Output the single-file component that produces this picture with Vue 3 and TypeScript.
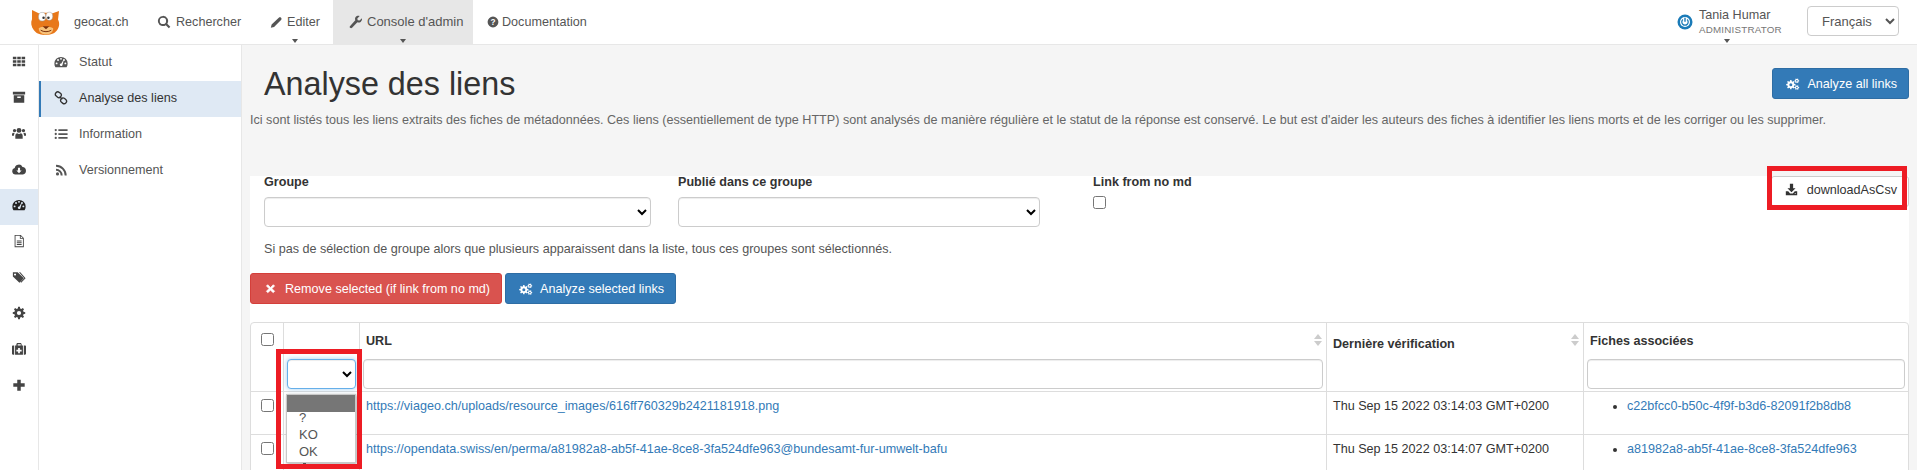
<script setup lang="ts">
const c = (x: number, y: number, r: number) =>
  `M${x - r} ${y}a${r} ${r} 0 1 0 ${2 * r} 0a${r} ${r} 0 1 0 ${-2 * r} 0z`

const gear = (cx: number, cy: number, r: number, hole: number, teeth = 8) => {
  const pts: string[] = []
  for (let i = 0; i < teeth; i++) {
    const a = (i / teeth) * Math.PI * 2
    const w = Math.PI / teeth / 2
    const inner = r * 0.74
    ;[
      [a - w * 1.3, inner],
      [a - w * 0.7, r],
      [a + w * 0.7, r],
      [a + w * 1.3, inner],
    ].forEach(([t, d]) => {
      pts.push(`${(cx + Math.cos(t) * d).toFixed(2)} ${(cy + Math.sin(t) * d).toFixed(2)}`)
    })
  }
  return `M${pts.join('L')}z${c(cx, cy, hole)}`
}

const gauge =
  'M8 2.2a7.6 7.6 0 0 0-7.6 7.6c0 1.5.4 2.9 1.1 4a.6.6 0 0 0 .5.3h12a.6.6 0 0 0 .5-.3c.7-1.1 1.1-2.5 1.1-4A7.6 7.6 0 0 0 8 2.2z' +
  c(3, 9.6, 1.1) + c(4.6, 5.8, 1.1) + c(8, 4.4, 1.1) + c(13, 9.6, 1.1) + c(11.4, 5.8, 1.1) +
  'M6.6 11.2a1.6 1.6 0 0 0 2.9.8l1.5-5.4-.7-.2-1.9 3.4a1.6 1.6 0 0 0-1.8 1.4z'

const icons: Record<string, string> = {
  grid: 'M1 3h4v3H1zM6 3h4v3H6zM11 3h4v3h-4zM1 7h4v3H1zM6 7h4v3H6zM11 7h4v3h-4zM1 11h4v3H1zM6 11h4v3H6zM11 11h4v3h-4z',
  archive: 'M1 2h14v3H1zM2 6h12v8.500H2zM6 7.500v1.500h4V7.500z',
  users:
    c(8, 5, 2.8) + c(2.9, 5.2, 1.9) + c(13.1, 5.2, 1.9) +
    'M3.800 14.500v-3.300c0-2 1.400-2.900 2.200-2.900.6.500 1.200.7 2 .7s1.400-.2 2-.7c.8 0 2.200.9 2.200 2.900v3.300zM0 11.200V9.400c0-1 .8-1.800 1.600-1.800.5.400 1 .6 1.600.6-.6.700-1 1.600-1 2.800v.2zM16 11.200V9.400c0-1-.8-1.800-1.600-1.800-.5.400-1 .6-1.600.6.6.700 1 1.600 1 2.800v.2z',
  cloud:
    'M4 14.200a3.700 3.700 0 0 1-.9-7.300 4.700 4.700 0 0 1 8.900-1.200 4.300 4.300 0 0 1 .5 8.500zM6.800 6.500v3.200H5l3 3.200 3-3.200H9.200V6.500z',
  gauge,
  file:
    'M3 1h7l3.500 3.500V15H3zM4 2v12h8.500V5.500H9V2zM10 2.300V4.500h2.200zM5.500 7.500h5.500v1H5.500zM5.500 9.500h5.500v1H5.500zM5.500 11.500h5.500v1H5.500z',
  tags:
    'M1 2.500h5.500l7 7-5 5-7.500-7zM3.500 4a1.200 1.200 0 1 0 .01 0zM8 2.500h1.500l6 7-5 5-.8-.8 4.300-4.200z',
  cog: gear(8, 8, 7.2, 2.4),
  medkit:
    'M5 4V2.500C5 1.700 5.700 1 6.500 1h3c.8 0 1.500.7 1.500 1.500V4h-1V2.500h-3.500V4zM1 4h1.500v10.500H1c-.5 0-1-.5-1-1V5c0-.5.5-1 1-1zM13.500 4H15c.5 0 1 .5 1 1v8.500c0 .5-.5 1-1 1h-1.500zM3.500 4h9v10.500h-9zM7 6.800v2H5v2h2v2h2v-2h2v-2H9v-2z',
  plus: 'M6 2h4v4h4.500v4H10v4.500H6V10H1.500V6H6z',
  search:
    'M6.800 1a5.800 5.800 0 1 0 3.300 10.600l3.400 3.400 1.700-1.700-3.400-3.400A5.800 5.800 0 0 0 6.800 1zM6.800 3.200a3.600 3.600 0 1 1 0 7.200 3.600 3.600 0 0 1 0-7.200z',
  pencil: 'M10.800 2.200c.8-.8 2-.8 2.800 0s.8 2 0 2.800l-8.600 8.600-4 1 1-4z',
  wrench:
    'M14.800 3.800l-2.800 2.600-2-.5-.5-2 2.700-2.700c-1.800-.6-3.700-.1-4.600 1.200-.8 1.100-.9 2.400-.4 3.500L1.300 12.500c-.7.700-.7 1.600 0 2.200s1.500.6 2.200 0l6.100-6.300c1.200.5 2.600.3 3.700-.5 1.300-1 1.800-2.700 1.500-4.100z',
  question: c(8, 8, 7.2),
  list:
    c(2, 3.500, 1.300) + c(2, 8, 1.300) + c(2, 12.500, 1.300) +
    'M5 2.500h10.500v2H5zM5 7h10.500v2H5zM5 11.500h10.500v2H5z',
  rss:
    c(4, 12.500, 1.800) +
    'M2.300 6.500v2.300a5.300 5.300 0 0 1 5.300 5.400h2.300a7.600 7.600 0 0 0-7.600-7.700zM2.300 2v2.300a9.900 9.900 0 0 1 9.900 9.900h2.300A12.200 12.200 0 0 0 2.300 2z',
  cogs: gear(5.800, 8.800, 5.600, 1.800) + gear(13, 4.200, 2.900, 1, 6) + gear(13, 12.300, 2.900, 1, 6),
  times: 'M4 2.500l4 4 4-4 2 2-4 3.500 4 4-2 2-4-3.500-4 3.500-2-2 4-4-4-3.500z',
  download:
    'M6 1h4v5.500h3L8 11.500 3 6.500h3zM1 10h3l2.300 3h3.400L12 10h3v5H1zM12 12.500h1.200v1H12z',
}

const rail = [
  { icon: 'grid', active: false },
  { icon: 'archive', active: false },
  { icon: 'users', active: false },
  { icon: 'cloud', active: false },
  { icon: 'gauge', active: true },
  { icon: 'file', active: false },
  { icon: 'tags', active: false },
  { icon: 'cog', active: false },
  { icon: 'medkit', active: false },
  { icon: 'plus', active: false },
]

const subnav = [
  { icon: 'gauge', label: 'Statut', active: false },
  { icon: 'link', label: 'Analyse des liens', active: true },
  { icon: 'list', label: 'Information', active: false },
  { icon: 'rss', label: 'Versionnement', active: false },
]

const rows = [
  {
    url: 'https://viageo.ch/uploads/resource_images/616ff760329b2421181918.png',
    date: 'Thu Sep 15 2022 03:14:03 GMT+0200',
    record: 'c22bfcc0-b50c-4f9f-b3d6-82091f2b8db8',
  },
  {
    url: 'https://opendata.swiss/en/perma/a81982a8-ab5f-41ae-8ce8-3fa524dfe963@bundesamt-fur-umwelt-bafu',
    date: 'Thu Sep 15 2022 03:14:07 GMT+0200',
    record: 'a81982a8-ab5f-41ae-8ce8-3fa524dfe963',
  },
]
</script>

<template>
  <div class="app">
    <header class="topbar">
      <a class="brand">
        <svg class="logo" viewBox="0 0 32 28">
          <path d="M2 1l8 4c3-1.500 9-1.500 12 0l8-3-1 9c1.500 3 2 7-1 11-3 4-8 5-12 5s-9-1-12-5C1 18 .5 14 2 10.500z" fill="#e8781a" />
          <path d="M9 20c3-2 11-2 15 0 0 4-3 6.500-7.500 6.500S9 24 9 20z" fill="#f7c27a" />
          <ellipse cx="12.500" cy="8" rx="3.800" ry="4.500" fill="#fff" stroke="#999" stroke-width=".5" />
          <ellipse cx="20" cy="7.500" rx="3.500" ry="4.200" fill="#fff" stroke="#999" stroke-width=".5" />
          <circle cx="14" cy="9" r="1.300" fill="#333" />
          <circle cx="19" cy="9" r="1.300" fill="#333" />
          <path d="M13 18h7l-3.500 3z" fill="#7a2f0a" />
          <path d="M11 22c3 2 8 2 11 0" fill="none" stroke="#7a2f0a" stroke-width="1" />
        </svg>
        <span>geocat.ch</span>
      </a>
      <nav class="mainnav">
        <a class="nav-item search-item">
          <svg class="ic" viewBox="0 0 16 16"><path fill-rule="evenodd" :d="icons.search" /></svg>Rechercher
        </a>
        <a class="nav-item edit-item caret">
          <svg class="ic" viewBox="0 0 16 16"><path :d="icons.pencil" /></svg>Editer
        </a>
        <a class="nav-item admin-item caret current">
          <svg class="ic" viewBox="0 0 16 16"><path :d="icons.wrench" /></svg>Console d'admin
        </a>
        <a class="nav-item doc-item">
          <svg class="ic ic-q" viewBox="0 0 16 16">
            <path :d="icons.question" />
            <text x="8" y="12" text-anchor="middle" class="q-mark">?</text>
          </svg>Documentation
        </a>
      </nav>
      <div class="user caret">
        <svg class="power" viewBox="0 0 18 18">
          <circle cx="9" cy="9" r="7.500" fill="#1a7bb8" />
          <circle cx="9" cy="9" r="5" fill="#fff" />
          <path d="M6.900 6.600a3.200 3.200 0 1 0 4.200 0" fill="none" stroke="#1a7bb8" stroke-width="1.300" />
          <path d="M9 4.800v4" stroke="#1a7bb8" stroke-width="1.400" />
        </svg>
        <div class="user-text">
          <div class="user-name">Tania Humar</div>
          <div class="user-role">ADMINISTRATOR</div>
        </div>
      </div>
      <select class="lang"><option>Français</option></select>
    </header>

    <div class="layout">
      <aside class="rail">
        <a v-for="item in rail" :key="item.icon" class="rail-item" :class="{ on: item.active }">
          <svg class="ic" viewBox="0 0 16 16"><path fill-rule="evenodd" :d="icons[item.icon]" /></svg>
        </a>
      </aside>

      <aside class="subnav">
        <a v-for="item in subnav" :key="item.label" class="sub-item" :class="{ on: item.active }">
          <svg v-if="item.icon === 'link'" class="ic sub-ic" viewBox="0 0 16 16">
            <g fill="none" stroke="#333" stroke-width="1.500">
              <rect x="1.500" y="1.500" width="7" height="5.500" rx="2.700" transform="rotate(40 5 4.200)" />
              <rect x="7.500" y="8.500" width="7" height="5.500" rx="2.700" transform="rotate(40 11 11.200)" />
              <path d="M6.500 6.500l3 3" />
            </g>
          </svg>
          <svg v-else class="ic sub-ic" viewBox="0 0 16 16"><path fill-rule="evenodd" :d="icons[item.icon]" /></svg>
          <span>{{ item.label }}</span>
        </a>
      </aside>

      <main class="main">
        <div class="page-head">
          <div class="title-row">
            <h1>Analyse des liens</h1>
            <button class="btn primary">
              <svg class="ic btn-ic" viewBox="0 0 18 16"><path fill-rule="evenodd" :d="icons.cogs" /></svg>Analyze all links
            </button>
          </div>
          <p class="lead">Ici sont listés tous les liens extraits des fiches de métadonnées. Ces liens (essentiellement de type HTTP) sont analysés de manière régulière et le statut de la réponse est conservé. Le but est d'aider les auteurs des fiches à identifier les liens morts et de les corriger ou les supprimer.</p>
        </div>

        <section class="card">
          <div class="filters">
            <div class="field f1">
              <label>Groupe</label>
              <select class="control"><option></option></select>
            </div>
            <div class="field f2">
              <label>Publié dans ce groupe</label>
              <select class="control"><option></option></select>
            </div>
            <div class="field f3">
              <label>Link from no md</label>
              <input type="checkbox" />
            </div>
            <button class="btn plain">
              <svg class="ic dl-ic" viewBox="0 0 16 16"><path fill-rule="evenodd" :d="icons.download" /></svg>downloadAsCsv
            </button>
          </div>

          <p class="hint">Si pas de sélection de groupe alors que plusieurs apparaissent dans la liste, tous ces groupes sont sélectionnés.</p>

          <div class="actions">
            <button class="btn danger">
              <svg class="ic x-ic" viewBox="0 0 16 16"><path :d="icons.times" /></svg>Remove selected (if link from no md)
            </button>
            <button class="btn primary">
              <svg class="ic btn-ic" viewBox="0 0 18 16"><path fill-rule="evenodd" :d="icons.cogs" /></svg>Analyze selected links
            </button>
          </div>

          <table class="links">
            <colgroup>
              <col class="c1" /><col class="c2" /><col class="c3" /><col class="c4" /><col class="c5" />
            </colgroup>
            <thead>
              <tr class="head-row">
                <th class="center"><input type="checkbox" /></th>
                <th></th>
                <th class="sortable">URL<i class="sort"></i></th>
                <th class="sortable low">Dernière vérification<i class="sort"></i></th>
                <th>Fiches associées</th>
              </tr>
              <tr class="filter-row">
                <th></th>
                <th><select class="control focus"><option></option></select></th>
                <th><input class="control" type="text" /></th>
                <th></th>
                <th><input class="control" type="text" /></th>
              </tr>
            </thead>
            <tbody>
              <tr v-for="row in rows" :key="row.url">
                <td class="center"><input type="checkbox" /></td>
                <td></td>
                <td><a class="lnk">{{ row.url }}</a></td>
                <td>{{ row.date }}</td>
                <td>
                  <ul class="records"><li><a class="lnk">{{ row.record }}</a></li></ul>
                </td>
              </tr>
            </tbody>
          </table>

          <ul class="popup">
            <li class="sel">&nbsp;</li>
            <li>?</li>
            <li>KO</li>
            <li>OK</li>
          </ul>
          <i class="popup-dot"></i>
          <div class="mark mark-filter"></div>
          <div class="mark mark-download"></div>
        </section>
      </main>
    </div>
  </div>
</template>

<style>
html, body { margin: 0; overflow: hidden; background: #fff; }
</style>

<style scoped>
.app {
  width: 1917px;
  height: 470px;
  overflow: hidden;
  font-family: "Liberation Sans", Arial, sans-serif;
  font-size: 12.6px;
  line-height: 18px;
  color: #555;
  background: #fff;
  display: flex;
  flex-direction: column;
}
.ic { width: 14px; height: 14px; fill: currentColor; flex: none; display: block; }

.topbar {
  height: 44px;
  flex: none;
  display: flex;
  align-items: stretch;
  border-bottom: 1px solid #e7e7e7;
  box-sizing: content-box;
}
.brand {
  display: flex;
  align-items: center;
  padding-left: 30px;
  width: 127px;
  box-sizing: border-box;
  color: #555;
}
.logo { width: 31px; height: 27px; margin-right: 13px; margin-top: 1px; flex: none; }
.mainnav { display: flex; flex: 1; }
.nav-item {
  display: flex;
  align-items: center;
  gap: 4px;
  position: relative;
  color: #555;
}
.search-item { width: 143px; padding-left: 30px; box-sizing: border-box; gap: 5px; }
.edit-item { width: 63px; }
.edit-item .ic { width: 13px; height: 13px; }
.admin-item { width: 140px; padding-left: 16px; box-sizing: border-box; background: #e7e7e7; font-size: 13px; }
.doc-item { padding-left: 14px; gap: 3px; }
.ic-q { width: 12px; height: 12px; }
.q-mark { fill: #fff; font-size: 11px; font-weight: 700; font-family: "Liberation Sans", sans-serif; }
.caret::after {
  content: "";
  position: absolute;
  left: 50%;
  bottom: 1px;
  margin-left: -3px;
  border: 3px solid transparent;
  border-top: 4px solid #555;
  border-bottom: 0;
}
.edit-item.caret::after { left: 22px; margin-left: 0; }
.admin-item.caret::after { left: 67px; margin-left: 0; }
.user {
  position: relative;
  display: flex;
  align-items: center;
  width: 129px;
  margin-right: 2px;
  box-sizing: border-box;
}
.user.caret::after { left: 48px; margin-left: 0; }
.power { width: 18px; height: 18px; margin-right: 5px; }
.user-name { font-size: 12.6px; line-height: 16px; }
.user-role { font-size: 9.8px; line-height: 14px; letter-spacing: .2px; color: #777; }
.lang {
  width: 92px;
  height: 30px;
  margin: 6px 18px 0 0;
  padding: 0 4px 0 10px;
  border: 1px solid #ccc;
  border-radius: 4px;
  background: #fff;
  color: #555;
  font: 13px "Liberation Sans", Arial, sans-serif;
}

.layout { flex: 1; display: flex; min-height: 0; }
.rail {
  width: 38px;
  flex: none;
  border-right: 1px solid #e7e7e7;
  background: #fff;
  box-sizing: content-box;
}
.rail-item {
  height: 36px;
  display: flex;
  align-items: center;
  justify-content: center;
  color: #444;
}
.rail-item .ic { transform: translateY(-2px); }
.rail-item.on { background: #dfe9f4; color: #222; }
.subnav {
  width: 202px;
  flex: none;
  background: #fff;
  border-right: 1px solid #e7e7e7;
}
.sub-item {
  height: 36px;
  display: flex;
  align-items: center;
  padding-left: 13px;
  padding-bottom: 2px;
  color: #555;
  border-left: 2px solid transparent;
  box-sizing: border-box;
}
.sub-item.on { background: #dfe9f4; border-left-color: #337ab7; color: #333; }
.sub-ic { margin-right: 11px; }

.main {
  flex: 1;
  min-width: 0;
  background: #f5f5f5;
  padding: 0 8px;
}
.page-head { height: 131px; }
.title-row {
  display: flex;
  justify-content: space-between;
  padding-top: 23px;
}
h1 {
  margin: -1px 0 0 14px;
  font-size: 32.3px;
  font-weight: 400;
  line-height: 35px;
  color: #333;
}
.lead { margin: 9px 0 0; color: #666; }
.btn {
  height: 31px;
  padding: 0 11px 0 13px;
  display: inline-flex;
  align-items: center;
  border: 1px solid transparent;
  border-radius: 3px;
  color: #fff;
  font: 12.6px "Liberation Sans", Arial, sans-serif;
}
.primary { background: #337ab7; border-color: #2e6da4; }
.danger { background: #d9534f; border-color: #d43f3a; }
.btn-ic { width: 15px; height: 14px; margin-right: 6px; }
.x-ic { width: 11px; height: 11px; margin-right: 9px; margin-left: 1px; stroke: currentColor; stroke-width: 1; }

.card {
  background: #fff;
  height: 295px;
  position: relative;
}
.filters { display: flex; align-items: flex-start; padding-left: 14px; }
.field { display: flex; flex-direction: column; }
.field label { font-weight: 700; color: #333; line-height: 13px; margin-bottom: 8px; }
.f1 { width: 387px; margin-right: 27px; }
.f2 { width: 362px; margin-right: 53px; }
.f3 input { margin: -1px 0 0; width: 13px; height: 13px; }
.plain {
  margin-left: auto;
  background: #fff;
  border-color: #ccc;
  color: #333;
  padding: 0 11px 4px 13px;
}
.dl-ic { margin-right: 9px; width: 13px; height: 13px; }
.control {
  width: 100%;
  height: 30px;
  box-sizing: border-box;
  border: 1px solid #ccc;
  border-radius: 4px;
  background: #fff;
  font: 13px "Liberation Sans", Arial, sans-serif;
  box-shadow: inset 0 1px 1px rgba(0, 0, 0, .075);
  display: block;
}
.hint { margin: 13px 0 0 14px; }
.actions { display: flex; gap: 3px; margin-top: 15px; }
.links {
  margin-top: 18px;
  width: 1659px;
  table-layout: fixed;
  border-collapse: separate;
  border-spacing: 0;
  border: 1px solid #ddd;
  border-radius: 4px 4px 0 0;
  color: #333;
}
.c1 { width: 32px; }
.c2 { width: 76px; }
.c3 { width: 967px; }
.c4 { width: 257px; }
.links th, .links td {
  border-left: 1px solid #ddd;
  padding: 0 3px;
  text-align: left;
}
.links th:first-child, .links td:first-child { border-left: 0; }
.head-row th {
  height: 31px;
  font-weight: 700;
  color: #333;
  position: relative;
  padding-left: 6px;
}
.head-row .low { padding-top: 5px; }
.head-row .center, .links .center { text-align: center; padding: 0; vertical-align: top; }
.head-row .center input { margin: 10px 0 0; }
.filter-row th { height: 32px; padding-top: 0; vertical-align: top; border-bottom: 1px solid #ddd; }
.filter-row .control { height: 30px; }
.focus {
  border-color: #66afe9;
  box-shadow: inset 0 1px 1px rgba(0, 0, 0, .075), 0 0 5px rgba(102, 175, 233, .6);
}
.sort {
  position: absolute;
  right: 4px;
  top: 11px;
  border: 4px solid transparent;
  border-bottom: 5px solid #ccc;
  border-top: 0;
}
.sort::after {
  content: "";
  position: absolute;
  left: -4px;
  top: 7px;
  border: 4px solid transparent;
  border-top: 5px solid #ccc;
  border-bottom: 0;
}
.links tbody td { height: 43px; vertical-align: top; padding-top: 5px; padding-left: 6px; border-bottom: 1px solid #ddd; box-sizing: border-box; }
.links tbody .center { padding-top: 5px; padding-left: 0; }
.links tbody .center input { margin: 2px 0 0; }
.lnk { color: #337ab7; }
.records { margin: 0; padding: 0 0 0 37px; }

.popup {
  position: absolute;
  left: 36px;
  top: 218px;
  width: 70px;
  height: 69px;
  margin: 0;
  padding: 0;
  list-style: none;
  background: #fff;
  box-sizing: border-box;
  border: 1px solid #c8c8c8;
  box-shadow: 1px 1px 3px rgba(0, 0, 0, .35);
  color: #555;
  font-size: 13px;
  line-height: 17px;
}
.popup li { height: 17px; padding-left: 12px; }
.popup .sel { background: #767676; margin-bottom: -3px; }
.popup-dot {
  position: absolute;
  left: 53px;
  top: 287px;
  width: 3px;
  height: 2px;
  background: #555;
}
.mark { position: absolute; border: 5px solid #ed1c24; box-sizing: border-box; pointer-events: none; }
.mark-filter { left: 26px; top: 173px; width: 86px; height: 120px; }
.mark-download { left: 1517px; top: -10px; width: 140px; height: 44px; }
</style>
